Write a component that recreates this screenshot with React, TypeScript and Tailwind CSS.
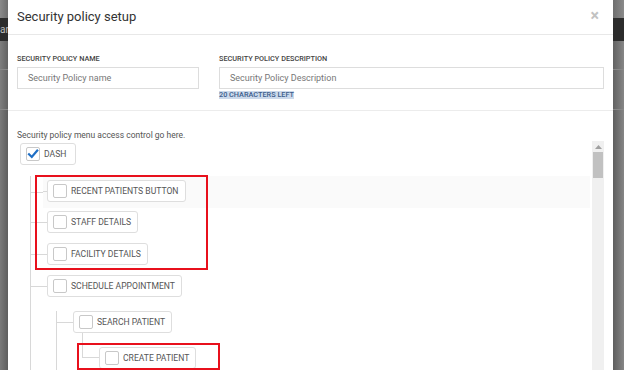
import React from "react";

const font = { fontFamily: "Roboto, 'Liberation Sans', sans-serif" };

function Check({ checked }: { checked?: boolean }) {
  return (
    <div className="w-[14px] h-[14px] border border-[#c8c8c8] rounded-[2px] bg-white flex items-center justify-center shrink-0">
      {checked && (
        <svg width="12" height="12" viewBox="0 0 12 12">
          <path d="M2 6.2 L4.8 9 L10.2 2.6" fill="none" stroke="#1f6fc5" strokeWidth="2.2" strokeLinecap="square" />
        </svg>
      )}
    </div>
  );
}

function Node({ label, checked, pr = "pr-[6px]" }: { label: string; checked?: boolean; pr?: string }) {
  return (
    <div className={`h-[22px] border border-[#dedede] rounded-[3px] bg-white flex items-center gap-[4px] pl-[5px] ${pr} shrink-0`}>
      <Check checked={checked} />
      <span className="text-[8.6px] text-[#555] leading-none whitespace-nowrap">{label}</span>
    </div>
  );
}

function Strip({ side }: { side: "left" | "right" }) {
  return (
    <div className={`${side === "left" ? "w-[8px]" : "w-[11px]"} h-full flex flex-col overflow-hidden bg-[#777] shrink-0`}>
      <div className={`h-[18px] ${side === "left" ? "bg-gradient-to-r from-[#8a8a8a] to-[#6e6e6e]" : "bg-gradient-to-r from-[#6e6e6e] to-[#8a8a8a]"}`} />
      <div className="h-[23px] bg-[#2c2c2c] flex items-center overflow-hidden">
        {side === "left" && <span className="text-[10px] text-[#bbb] leading-none whitespace-nowrap">ar</span>}
      </div>
      <div className={`h-[29px] border-b border-[#888] ${side === "left" ? "bg-gradient-to-r from-[#7e7e7e] to-[#626262]" : "bg-gradient-to-r from-[#626262] to-[#868686]"}`} />
      <div className={`h-[40px] border-b border-[#888] ${side === "left" ? "bg-gradient-to-r from-[#7e7e7e] to-[#626262]" : "bg-gradient-to-r from-[#626262] to-[#868686]"}`} />
      <div className={`flex-1 ${side === "left" ? "bg-gradient-to-r from-[#7a7a7a] to-[#5e5e5e]" : "bg-gradient-to-r from-[#5e5e5e] to-[#868686]"}`} />
    </div>
  );
}

export default function App() {
  return (
    <div className="relative w-[624px] h-[370px] overflow-hidden flex bg-[#777]" style={font}>
      <Strip side="left" />
      <div className="flex-1 h-full bg-white flex flex-col overflow-hidden">
        {/* header */}
        <div className="h-[35px] shrink-0 border-b border-[#e8e8e8] flex items-center justify-between pl-[9px] pr-[14px]">
          <span className="text-[13px] text-[#333] leading-none -mt-[1px]">Security policy setup</span>
          <span className="text-[16px] font-bold text-[#c2c2c2] leading-none -mt-[2px]">×</span>
        </div>
        {/* form */}
        <div className="px-[9px] pt-[20px] flex gap-[20px] shrink-0">
          <div className="w-[182px] flex flex-col">
            <span className="text-[7.3px] font-medium text-[#444] leading-[8px] h-[8px]">SECURITY POLICY NAME</span>
            <div className="mt-[4px] h-[22px] border border-[#ddd] flex items-center pl-[10px]">
              <span className="text-[9px] text-[#777] leading-none">Security Policy name</span>
            </div>
          </div>
          <div className="flex-1 flex flex-col">
            <span className="text-[7.3px] font-medium text-[#444] leading-[8px] h-[8px]">SECURITY POLICY DESCRIPTION</span>
            <div className="mt-[4px] h-[22px] border border-[#ddd] flex items-center pl-[10px]">
              <span className="text-[9px] text-[#777] leading-none">Security Policy Description</span>
            </div>
            <div className="mt-[2px] flex">
              <span className="text-[7.3px] font-medium text-[#3d5d8c] bg-[#cbd9eb] leading-[8px]">20 CHARACTERS LEFT</span>
            </div>
          </div>
        </div>
        <div className="mt-[11px] border-b border-[#ececec] shrink-0" />
        <div className="px-[9px] pt-[19px] shrink-0">
          <span className="text-[8.5px] text-[#555] leading-[11px] block">Security policy menu access control go here.</span>
        </div>
        {/* tree area */}
        <div className="pl-[9px] pr-[9px] flex-1 flex gap-[2px] overflow-hidden">
          <div className="flex-1 pt-[2px] overflow-hidden">
            <div className="ml-[3px] flex">
              <Node label="DASH" checked pr="pr-[9px]" />
            </div>
            <div className="ml-[13px] border-l border-[#d8d8d8]">
              {/* recent row */}
              <div className="mt-[11px] flex items-center">
                <div className="w-[12px] h-px bg-[#d8d8d8]" />
                <div className="flex-1 bg-[#fafafa] pt-[4px] pb-[6px] flex items-center">
                  <div className="w-[4px] h-px bg-[#d8d8d8]" />
                  <Node label="RECENT PATIENTS BUTTON" />
                </div>
              </div>
              <div className="mt-[3px] flex items-center">
                <div className="w-[16px] h-px bg-[#d8d8d8]" />
                <Node label="STAFF DETAILS" />
              </div>
              <div className="mt-[10px] flex items-center">
                <div className="w-[16px] h-px bg-[#d8d8d8]" />
                <Node label="FACILITY DETAILS" />
              </div>
              <div className="mt-[10px] flex items-center">
                <div className="w-[16px] h-px bg-[#d8d8d8]" />
                <Node label="SCHEDULE APPOINTMENT" />
              </div>
              <div className="ml-[25px] border-l border-[#d8d8d8] pb-[20px]">
                <div className="mt-[14px] flex items-center">
                  <div className="w-[16px] h-px bg-[#d8d8d8]" />
                  <Node label="SEARCH PATIENT" />
                </div>
                <div className="ml-[25px] flex items-start">
                  <div className="w-[17px] h-[25px] border-l border-b border-[#d8d8d8] shrink-0" />
                  <div className="mt-[14px]">
                    <Node label="CREATE PATIENT" />
                  </div>
                </div>
              </div>
            </div>
          </div>
          {/* scrollbar */}
          <div className="w-[12px] bg-[#f0f0f0] flex flex-col items-center shrink-0">
            <div className="h-[11px] flex items-center justify-center">
              <svg width="7" height="4" viewBox="0 0 7 4"><path d="M0 4 L3.5 0 L7 4 Z" fill="#a0a0a0" /></svg>
            </div>
            <div className="w-[10px] h-[26px] bg-[#c1c1c1]" />
          </div>
        </div>
      </div>
      <Strip side="right" />
      {/* red annotation boxes */}
      <div className="absolute left-[35px] top-[175px] w-[173px] h-[95px] border-[2.5px] border-[#e8101c] pointer-events-none" />
      <div className="absolute left-[77px] top-[343px] w-[143px] h-[27px] border-[2.5px] border-[#e8101c] pointer-events-none" />
    </div>
  );
}
